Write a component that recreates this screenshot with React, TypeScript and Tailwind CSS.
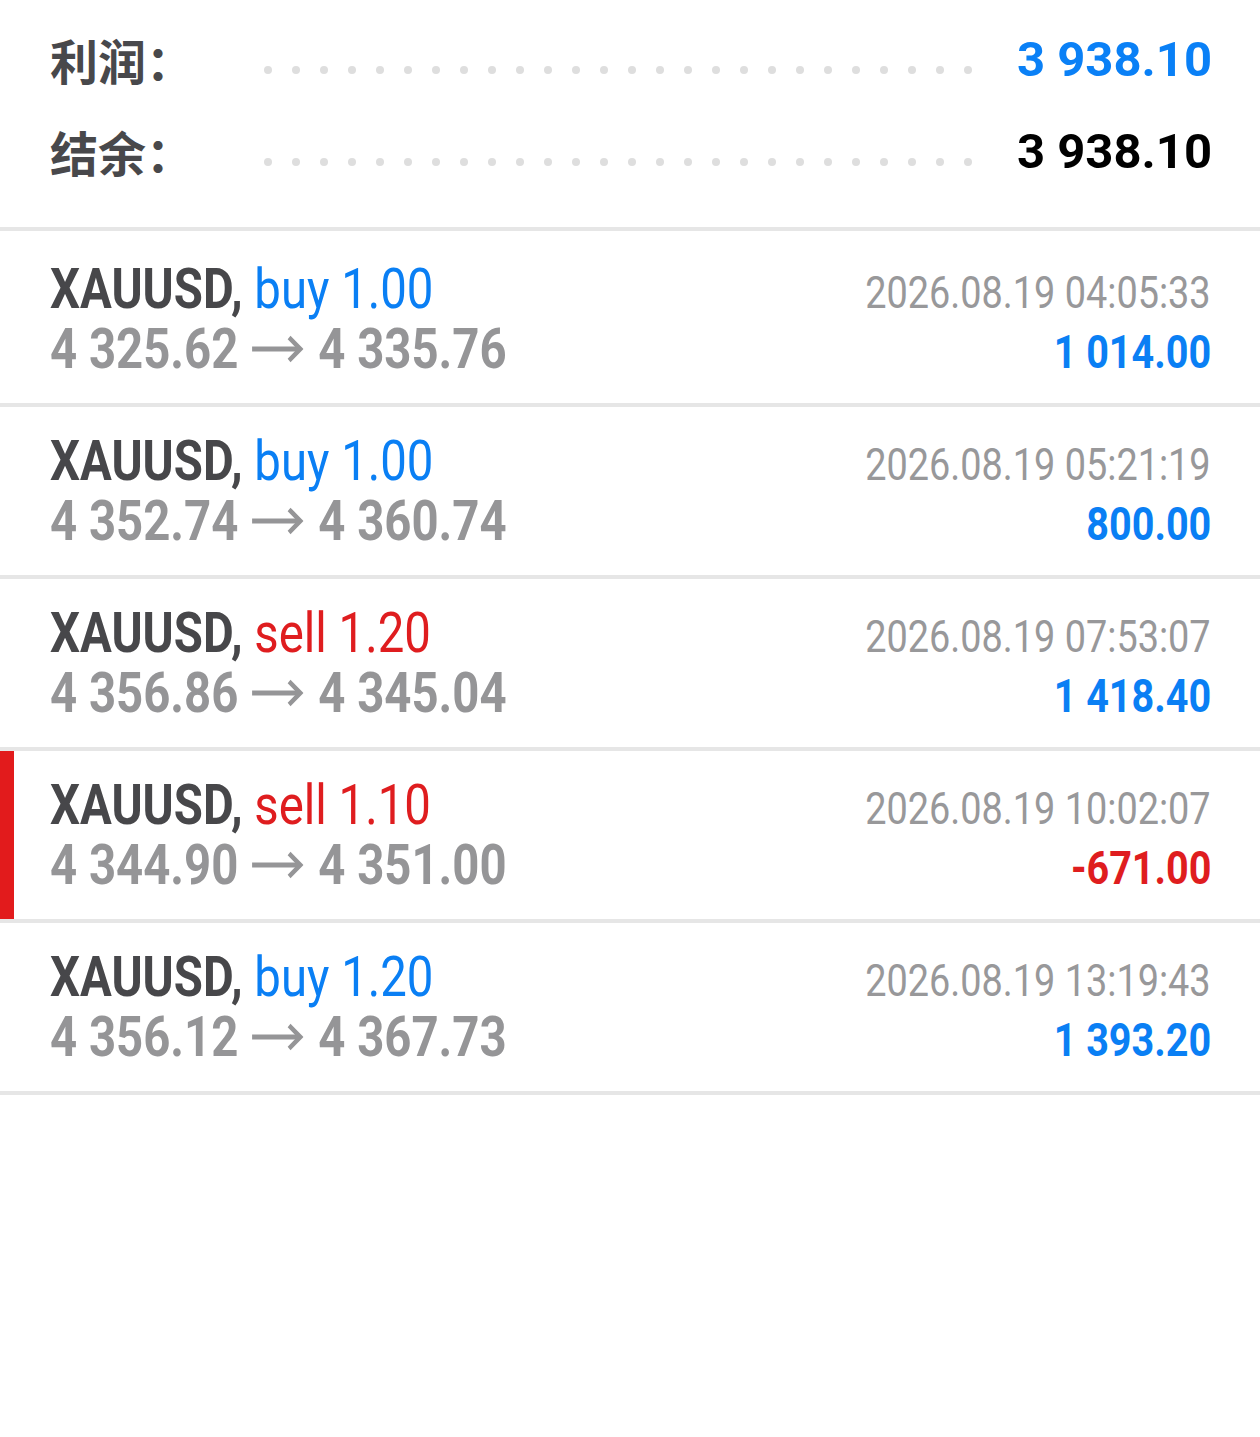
import React from "react";

type Trade = {
  side: "buy" | "sell";
  vol: string;
  open: string;
  close: string;
  time: string;
  profit: string;
  marked?: boolean;
};

const trades: Trade[] = [
  { side: "buy", vol: "1.00", open: "4 325.62", close: "4 335.76", time: "2026.08.19 04:05:33", profit: "1 014.00" },
  { side: "buy", vol: "1.00", open: "4 352.74", close: "4 360.74", time: "2026.08.19 05:21:19", profit: "800.00" },
  { side: "sell", vol: "1.20", open: "4 356.86", close: "4 345.04", time: "2026.08.19 07:53:07", profit: "1 418.40" },
  { side: "sell", vol: "1.10", open: "4 344.90", close: "4 351.00", time: "2026.08.19 10:02:07", profit: "-671.00", marked: true },
  { side: "buy", vol: "1.20", open: "4 356.12", close: "4 367.73", time: "2026.08.19 13:19:43", profit: "1 393.20" },
];

const dots = Array.from({ length: 26 }, (_, i) => i);

function SummaryRow({ label, value, valueClass }: { label: string; value: string; valueClass: string }) {
  return (
    <div className="flex h-[92px] items-center pl-[50px] pr-[48px]">
      <div className="w-[214px] shrink-0 text-[48px] font-bold leading-none text-[#48484b] [font-family:'Noto_Sans_CJK_SC',sans-serif]">
        {label}
      </div>
      <div className="mt-[22px] flex w-[708px] shrink-0 justify-between">
        {dots.map((d) => (
          <span key={d} className="block h-[8px] w-[8px] rounded-full bg-[#dedede]" />
        ))}
      </div>
      <div className={`flex-1 text-right text-[49px] font-bold leading-none [font-family:Roboto,sans-serif] ${valueClass}`}>
        {value}
      </div>
    </div>
  );
}

function Arrow() {
  return (
    <svg
      className="ml-[14px] mr-[17px] inline-block align-[4.5px]"
      width="62"
      height="30"
      viewBox="0 0 62 30"
      fill="none"
      stroke="currentColor"
      strokeWidth="5"
      strokeLinecap="butt"
      strokeLinejoin="miter"
    >
      <path d="M2 15H58" />
      <path d="M45 3.5L58 15L45 26.5" />
    </svg>
  );
}

function TradeRow({ t }: { t: Trade }) {
  const sideColor = t.side === "buy" ? "text-[#0a7ff4]" : "text-[#df1d1f]";
  const profitColor = t.profit.startsWith("-") ? "text-[#df1d1f]" : "text-[#0a7ff4]";
  return (
    <div className="flex border-b-4 border-[#e6e6e6]">
      <div className={`w-[14px] shrink-0 ${t.marked ? "bg-[#e21b1c]" : "bg-transparent"}`} />
      <div className="flex-1 pb-[24px] pl-[36px] pr-[49px] pt-[24px] [font-family:Roboto,sans-serif]">
        <div className="flex h-[60px] items-baseline justify-between leading-[60px] whitespace-nowrap">
          <span className="inline-block origin-left scale-x-[0.86] text-[55px] font-bold text-[#47474a]">
            XAUUSD, <span className={`font-normal ${sideColor}`}>{t.side} {t.vol}</span>
          </span>
          <span className="inline-block origin-right scale-x-[0.86] text-[44px] font-normal text-[#98989a]">
            {t.time}
          </span>
        </div>
        <div className="flex h-[60px] items-baseline justify-between leading-[60px] whitespace-nowrap">
          <span className="inline-block origin-left scale-x-[0.86] text-[55px] font-bold text-[#959597]">
            {t.open}
            <Arrow />
            {t.close}
          </span>
          <span className={`inline-block origin-right scale-x-[0.86] text-[46px] font-bold ${profitColor}`}>
            {t.profit}
          </span>
        </div>
      </div>
    </div>
  );
}

export default function App() {
  return (
    <div className="min-h-screen w-full bg-white">
      <div className="border-b-4 border-[#e6e6e6] pb-[30px] pt-[13px]">
        <SummaryRow label="利润：" value="3 938.10" valueClass="text-[#0a80f6]" />
        <SummaryRow label="结余：" value="3 938.10" valueClass="text-black" />
      </div>
      <div className="pt-[4px]">
        {trades.map((t, i) => (
          <TradeRow key={i} t={t} />
        ))}
      </div>
    </div>
  );
}
